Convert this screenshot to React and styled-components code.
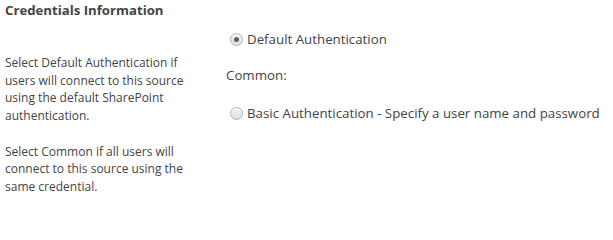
import React from 'react';
import styled, { createGlobalStyle } from 'styled-components';

const Global = createGlobalStyle`
  body {
    margin: 0;
    background: #fff;
    font-family: "Open Sans", "Noto Sans", sans-serif;
    color: #444;
  }
`;

const Section = styled.div`
  display: grid;
  grid-template-columns: 221px 1fr;
  padding: 2px 0 0 5px;
`;

const Title = styled.h3`
  grid-column: 1 / span 2;
  margin: 0;
  font-size: 13.2px;
  font-weight: 700;
  line-height: 17px;
  color: #444;
`;

const Description = styled.div`
  padding-top: 35px;
  font-size: 12px;
  line-height: 17.7px;
  width: 200px;
  p {
    margin: 0 0 17.7px 0;
  }
`;

const Options = styled.div`
  padding-top: 11px;
  font-size: 13.3px;
`;

const Option = styled.label`
  display: flex;
  align-items: center;
  gap: 4px;
  margin-left: ${p => p.$indent || 0}px;
  line-height: 18px;
`;

const Radio = styled.span`
  width: 11px;
  height: 11px;
  border-radius: 50%;
  border: 1px solid #b4b4b4;
  background: linear-gradient(#f6f6f6, #dedede);
  display: inline-flex;
  align-items: center;
  justify-content: center;
  box-sizing: content-box;
  &::after {
    content: '';
    width: 5px;
    height: 5px;
    border-radius: 50%;
    background: ${p => (p.$checked ? '#606060' : 'transparent')};
  }
`;

const GroupLabel = styled.div`
  margin: 18px 0 0 0;
  line-height: 18px;
`;

const Spacer = styled.div`
  height: ${p => p.$h}px;
`;

export default function App() {
  return (
    <>
      <Global />
      <Section>
        <Title>Credentials Information</Title>
        <Description>
          <p>
            Select Default Authentication if users will connect to this source
            using the default SharePoint authentication.
          </p>
          <p>
            Select Common if all users will connect to this source using the
            same credential.
          </p>
        </Description>
        <Options>
          <Option $indent={4}>
            <Radio $checked />
            Default Authentication
          </Option>
          <GroupLabel>Common:</GroupLabel>
          <Spacer $h={20} />
          <Option $indent={4}>
            <Radio />
            Basic Authentication - Specify a user name and password
          </Option>
        </Options>
      </Section>
    </>
  );
}
